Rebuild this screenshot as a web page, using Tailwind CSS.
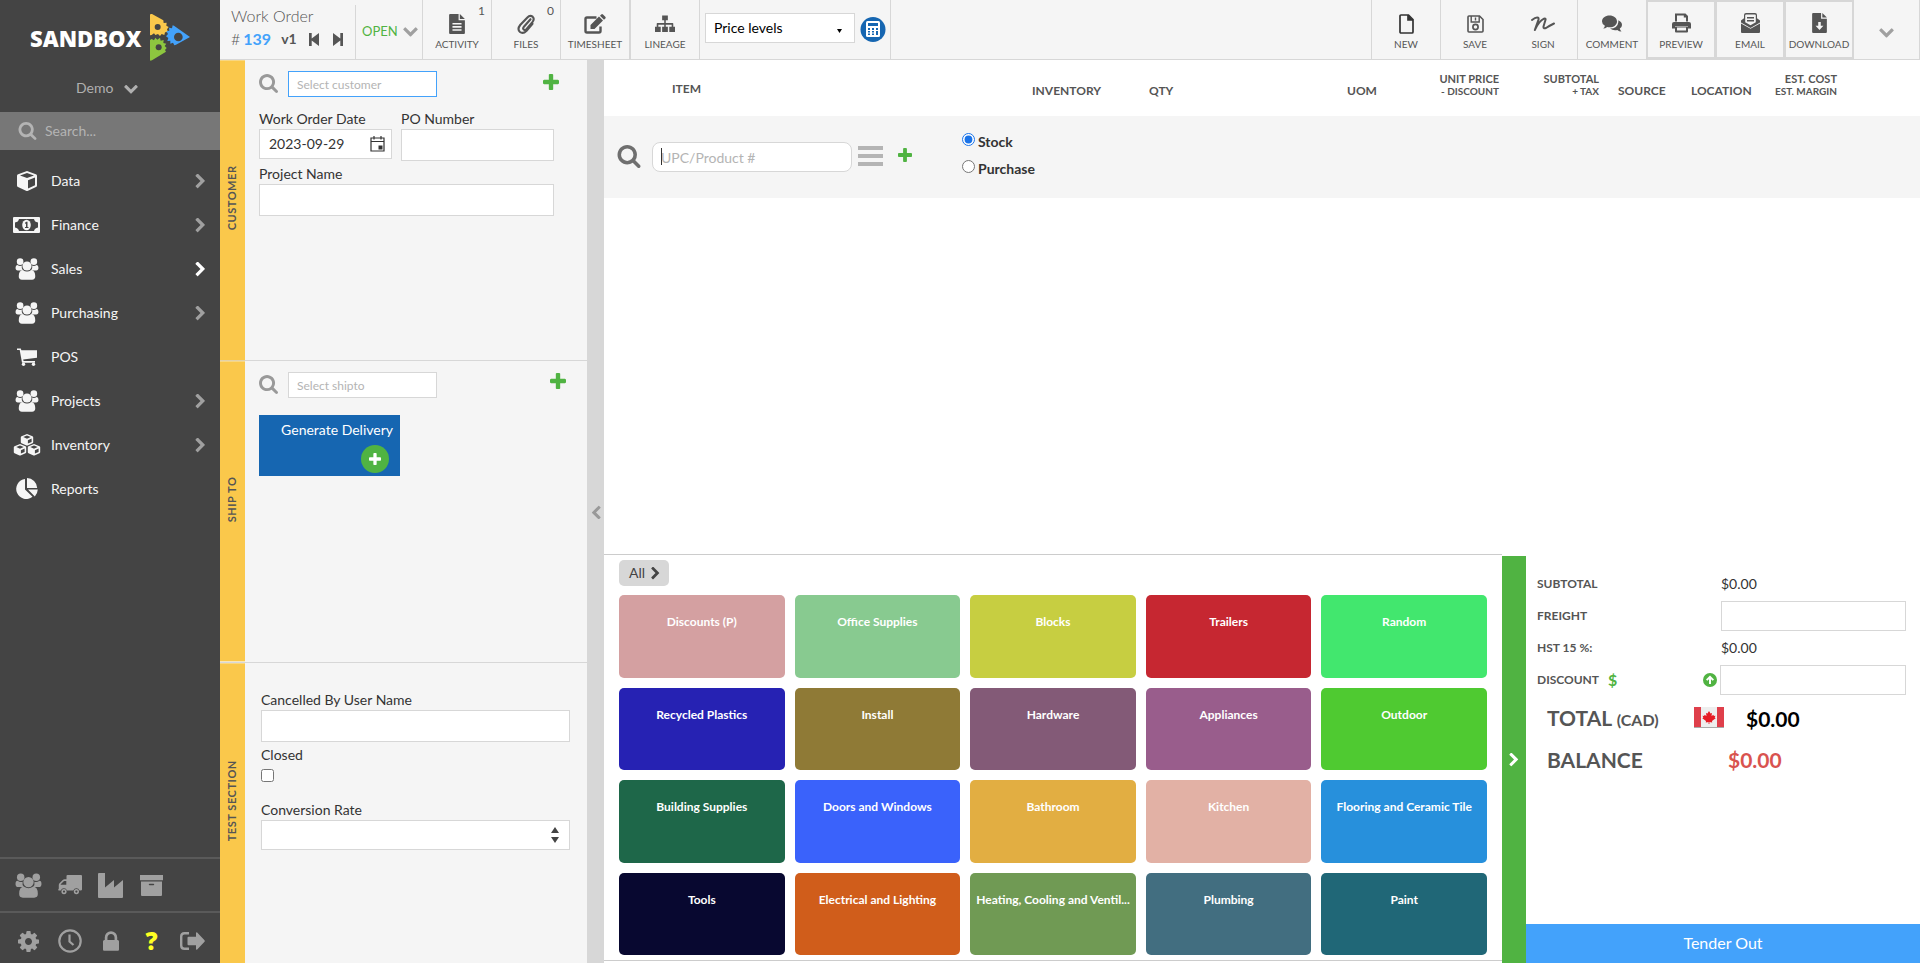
<!DOCTYPE html>
<html lang="en">
<head>
<meta charset="utf-8">
<title>Work Order #139</title>
<script src="https://cdn.jsdelivr.net/npm/@tailwindcss/browser@4"></script>
</head>
<body class="flex h-screen min-w-[1500px] overflow-hidden bg-white font-['Lato',sans-serif] text-sm leading-5 text-[#333]">

<svg class="hidden" aria-hidden="true">
  <symbol id="down" viewBox="64 64 1664 1664"><path d="M1683 808l-742 741q-19 19-45 19t-45-19l-742-741q-19-19-19-45.500t19-45.500l166-165q19-19 45-19t45 19l531 531 531-531q19-19 45-19t45 19l166 165q19 19 19 45.500t-19 45.500z"/></symbol>
  <symbol id="right" viewBox="64 64 1664 1664"><path d="M1363 877l-742 742q-19 19-45 19t-45-19l-166-166q-19-19-19-45t19-45l531-531-531-531q-19-19-19-45t19-45l166-166q19-19 45-19t45 19l742 742q19 19 19 45t-19 45z"/></symbol>
  <symbol id="search" viewBox="64 128 1664 1664"><path stroke="currentColor" stroke-width="0" d="M1216 832q0-185-131.500-316.500t-316.500-131.500-316.500 131.500-131.500 316.500 131.500 316.500 316.500 131.500 316.500-131.500 131.500-316.500zm512 832q0 52-38 90t-90 38q-54 0-90-38l-343-342q-179 124-399 124-143 0-273.500-55.500t-225-150-150-225-55.500-273.500 55.500-273.500 150-225 225-150 273.500-55.500 273.500 55.500 225 150 150 225 55.500 273.500q0 220-124 399l343 343q37 37 37 90z"/></symbol>
  <symbol id="plus" viewBox="192 128 1408 1408"><path d="M1600 736v192q0 40-28 68t-68 28h-416v416q0 40-28 68t-68 28h-192q-40 0-68-28t-28-68v-416h-416q-40 0-68-28t-28-68v-192q0-40 28-68t68-28h416v-416q0-40 28-68t68-28h192q40 0 68 28t28 68v416h416q40 0 68 28t28 68z"/></symbol>
  <symbol id="lock" viewBox="320 128 1152 1408"><path d="M640 768h512v-192q0-106-75-181t-181-75-181 75-75 181v192zm832 96v576q0 40-28 68t-68 28h-960q-40 0-68-28t-28-68v-576q0-40 28-68t68-28h32v-192q0-184 132-316t316-132 316 132 132 316v192h32q40 0 68 28t28 68z"/></symbol>
  <symbol id="cog" viewBox="128 128 1536 1536"><path d="M1152 896q0-106-75-181t-181-75-181 75-75 181 75 181 181 75 181-75 75-181zm512-109v222q0 12-8 23t-20 13l-185 28q-19 54-39 91 35 50 107 138 10 12 10 25t-9 23q-27 37-99 108t-94 71q-12 0-26-9l-138-108q-44 23-91 38-16 136-29 186-7 28-36 28h-222q-14 0-24.500-8.500t-11.500-21.500l-28-184q-49-16-90-37l-141 107q-10 9-25 9-14 0-25-11-126-114-165-168-7-10-7-23 0-12 8-23 15-21 51-66.500t54-70.500q-27-50-41-99l-183-27q-13-2-21-12.500t-8-23.500v-222q0-12 8-23t19-13l186-28q14-46 39-92-40-57-107-138-10-12-10-24 0-10 9-23 26-36 98.500-107.500t94.500-71.500q13 0 26 10l138 107q44-23 91-38 16-136 29-186 7-28 36-28h222q14 0 24.500 8.500t11.500 21.500l28 184q49 16 90 37l142-107q9-9 24-9 13 0 25 10 129 119 165 170 7 8 7 22 0 12-8 23-15 21-51 66.500t-54 70.500q26 50 41 98l183 28q13 2 21 12.500t8 23.500z"/></symbol>
  <symbol id="group" viewBox="0 0 26 24"><circle cx="5.500" cy="4" r="3.600"/><circle cx="20.500" cy="4" r="3.600"/><path d="M.5 10.500q0-3 2-3 2.500 1.800 4.800.8-.6 3.200 1.300 5.200H3q-2.500 0-2.500-3zM25.500 10.500q0-3-2-3-2.500 1.800-4.800.8.6 3.200-1.300 5.200H23q2.500 0 2.500-3z"/><circle cx="13" cy="8.700" r="5"/><path d="M4 20q0-6.500 4.500-7 4.500 3.500 9 0 4.500.5 4.500 7 0 3.700-3.500 3.700h-11Q4 23.700 4 20z"/></symbol>
  <symbol id="cube" viewBox="0 0 20 20"><path fill-rule="evenodd" d="M10 0l8.800 3.200q1.200.4 1.200 1.600v9.700q0 1-1 1.600L11 19.800q-1 .4-2 0l-8-3.700q-1-.6-1-1.600V4.800q0-1.200 1.200-1.600zM10 1.900L3 4.500 10 7.100l7-2.600zM11 17.600l7-3.400V6.600l-7 2.600z"/></symbol>
  <symbol id="money" viewBox="0 0 27 16"><path fill-rule="evenodd" d="M1 0h25q1 0 1 1v14q0 1-1 1H1q-1 0-1-1V1q0-1 1-1zM6 2Q5.500 5 2 5.500v5Q5.500 11 6 14h15q.5-3 4-3.500v-5Q21.500 5 21 2z"/><ellipse cx="13.500" cy="8" rx="4.300" ry="5.300"/><path d="M12 5.800l1.300-1.100h1.200v5.200h1v1.200H12V9.900h1V6.500l-.8.500z" fill="#444"/></symbol>
  <symbol id="cart" viewBox="0 0 20 18"><path d="M0 .5h3.800l.6 1.800H20v7.500L6.200 11.500l.4 1.500H18v1.700H5L2.700 2H0z"/><circle cx="6.500" cy="16.200" r="1.700"/><circle cx="16.500" cy="16.200" r="1.700"/></symbol>
  <symbol id="cubes" viewBox="0 0 28 22"><g fill-rule="evenodd"><path d="M14 0l5.500 2.200q.7.300.7 1v5q0 .7-.7 1L14.500 11.600h-1L8.500 9.200q-.7-.3-.7-1v-5q0-.7.7-1zm0 1.600L10.300 3.100 14 4.700l3.700-1.600zm.9 8l3.700-1.700V4.600l-3.700 1.600z"/><path d="M7 10l5.500 2.200q.7.300.7 1v5q0 .7-.7 1L7.500 21.600h-1L1.500 19.200q-.7-.3-.7-1v-5q0-.7.7-1zm0 1.600l-3.700 1.500L7 14.700l3.700-1.600zm.9 8l3.700-1.700v-3.300l-3.700 1.600zM21 10l5.500 2.200q.7.300.7 1v5q0 .7-.7 1L21.500 21.600h-1l-5-2.400q-.7-.3-.7-1v-5q0-.7.7-1zm0 1.600l-3.700 1.500 3.700 1.600 3.700-1.600zm.9 8l3.700-1.700v-3.300l-3.700 1.600z"/></g></symbol>
  <symbol id="pie" viewBox="0 0 23 22"><path d="M10 1v10.500l7.500 7.200A10 10 0 1 1 10 1z"/><path d="M12 0a10.500 10.500 0 0 1 10.200 10H12zM13 11.500h9.800a11 11 0 0 1-3 7z"/></symbol>
  <symbol id="truck" viewBox="0 0 24 20"><path fill-rule="evenodd" d="M9.500 0H23q1 0 1 1v13.500q0 1-1.500 1h-1a3.300 3.300 0 0 0-6.200 0H9a3.300 3.300 0 0 0-6.200 0H1Q0 15.500 0 14.700q.8-.5.800-1.200V10q0-1 .7-1.800l3.300-3.300q.7-.7 1.700-.7h2V1q0-1 1-1zM8.300 6H6L2.700 9.200v.6h5.600z"/><path fill-rule="evenodd" d="M6 14a2.600 2.600 0 1 1 0 5.200A2.600 2.600 0 0 1 6 14zm0 1.500a1.100 1.100 0 1 0 0 2.200 1.100 1.100 0 0 0 0-2.200zM18.400 14a2.600 2.600 0 1 1 0 5.200 2.600 2.600 0 0 1 0-5.200zm0 1.500a1.100 1.100 0 1 0 0 2.200 1.100 1.100 0 0 0 0-2.200z"/></symbol>
  <symbol id="industry" viewBox="0 0 25 25"><path d="M1 0h6v14.500l9-7.500v7.500L25 7v17q0 1-1 1H1q-1 0-1-1V1q0-1 1-1z"/></symbol>
  <symbol id="archive" viewBox="0 0 23 21"><path fill-rule="evenodd" d="M0 0h23v5.300H0zM1 6.500h21V20q0 1-1 1H2q-1 0-1-1zm8.500 2.200q-.7 0-.7.800t.7.800h4q.7 0 .7-.8t-.7-.8z"/></symbol>
  <symbol id="clock" viewBox="0 0 24 24"><circle cx="12" cy="12" r="10.700" fill="none" stroke="currentColor" stroke-width="2.200"/><path d="M11.500 5.500v7l4 3.500" fill="none" stroke="currentColor" stroke-width="2.200"/></symbol>
  <symbol id="signout" viewBox="0 0 25 18"><path d="M9 1.200H4.500Q1.200 1.200 1.200 4.500v9q0 3.300 3.300 3.300H9" fill="none" stroke="currentColor" stroke-width="2.400"/><path d="M16 .8v4H8.500q-1 0-1 1v6.400q0 1 1 1H16v4q.3.800 1.200.3l7.300-7.700q.6-.8 0-1.600L17.200.5Q16.300 0 16 .8z"/></symbol>
  <symbol id="doc" viewBox="0 0 15 19"><path fill-rule="evenodd" d="M1 0h8v6h6v12q0 1-1 1H1q-1 0-1-1V1q0-1 1-1zM3.200 8.500V10h8.600V8.500zm0 3V13h8.600v-1.500zm0 3V16h8.600v-1.500z"/><path d="M10.200 0L15 4.800h-4.800z"/></symbol>
  <symbol id="clip" viewBox="0 0 18 20"><path d="M13.500 5.200L6.700 13q-1.200 1.700.2 2.700 1.200.8 2.500-.5l6-7q2.500-3.300.2-5.500-2.600-2-5.200.7L3.200 11q-3.300 4.300-.2 7 3 2.300 6.600-1.300l5.900-6.800" fill="none" stroke="currentColor" stroke-width="2.100" stroke-linecap="round"/></symbol>
  <symbol id="edit" viewBox="0 0 22 20"><path d="M12.500 3.500H3Q1.500 3.500 1.500 5v12q0 1.500 1.500 1.500h12q1.500 0 1.500-1.500v-4.500" fill="none" stroke="currentColor" stroke-width="2.400"/><path d="M6.500 11L15 2.600l4 4-8.500 8.400h-4zM16 1.700l1.200-1.200q.9-.9 1.800 0l2.300 2.300q.8.800 0 1.700L20 5.700z"/></symbol>
  <symbol id="tree" viewBox="0 0 21 18"><path d="M7.500 0h6v5h-2.200v3h7.200q.7 0 .7.700V12H21v5.500h-6V12h2.500V9.700h-6.200V12h2.200v5.500h-6V12h2.200V9.700H3.500V12H6v5.500H0V12h1.800V8.700q0-.7.700-.7h7.200V5H7.500z"/></symbol>
  <symbol id="newdoc" viewBox="0 0 15 20"><path d="M1 2q0-1 1-1h7.500L14 5.500V18q0 1-1 1H2q-1 0-1-1zM9 1v5h5" fill="none" stroke="currentColor" stroke-width="1.700"/><path d="M9 1l5 5H9z"/></symbol>
  <symbol id="floppy" viewBox="0 0 17 18"><path d="M2 1h10.500L16 4.500V16q0 1-1 1H2q-1 0-1-1V2q0-1 1-1z" fill="none" stroke="currentColor" stroke-width="1.600"/><path d="M4.200 1v6h8V1M8.500 2.500v3" fill="none" stroke="currentColor" stroke-width="1.400"/><circle cx="8.500" cy="12" r="2.600" fill="none" stroke="currentColor" stroke-width="1.700"/></symbol>
  <symbol id="sign" viewBox="0 0 24 16"><path d="M1 4Q5 .8 7 1.700q1.200.8 0 3.300L3.800 14Q8 5 13 2.700q2.300-.7 1.300 1.800l-1.800 6q-.4 2.500 2.500 1.500Q19 9.500 23 7.500" fill="none" stroke="currentColor" stroke-width="2" stroke-linecap="round" stroke-linejoin="round"/></symbol>
  <symbol id="comments" viewBox="0 0 20 17"><path d="M7.500 0C11.700 0 15 2.600 15 5.900s-3.300 5.900-7.500 5.900q-1.300 0-2.300-.3Q3.300 13 1.200 13q1.500-1.200 1.700-2.700Q0 8.600 0 5.900C0 2.600 3.300 0 7.500 0z"/><path d="M16.300 4.800Q20 6.500 20 9.500q0 2-2.200 3.600.2 1.700 1.700 2.900-2.500 0-4.200-1.500-4 1-7.300-1.400 7.500 0 8.300-6.400.1-1 0-1.900z"/></symbol>
  <symbol id="print" viewBox="0 0 19 19"><path fill-rule="evenodd" d="M3 0h10.500L16 2.500V8h-2V4h-2.200V2H5v6H3zM2 8.500h15q2 0 2 2V15h-3v-2.500H3V15H0v-4.500q0-2 2-2zM3 13h13v5q0 1-1 1H4q-1 0-1-1zm2 1v3h9v-3z"/></symbol>
  <symbol id="mail" viewBox="0 0 19 20"><path d="M0 7.500l3-2.300V2q0-2 2-2h9q2 0 2 2v3.200l3 2.300v2L9.500 15 0 9.500z"/><path d="M4.200 2.500q0-1 1-1h8.600q1 0 1 1v6.800l-5.300 3-5.300-3z" fill="#f5f5f5"/><path d="M6 4h7v1.500H6zM6 7h7v1.500H6z"/><path d="M0 10.500l9.500 5.300 9.500-5.300V19q0 1-1 1H1q-1 0-1-1z"/></symbol>
  <symbol id="dldoc" viewBox="0 0 14 19"><path fill-rule="evenodd" d="M1 0h7.500v5.500H14V18q0 1-1 1H1q-1 0-1-1V1q0-1 1-1zm4.800 8.500V12H3.300L7 16.200l3.700-4.200H8.200V8.500z"/><path d="M9.700 0L14 4.300H9.700z"/></symbol>
</svg>

<!-- Sidebar -->
<aside class="flex w-[220px] shrink-0 flex-col bg-[#444] text-[#f5f5f5]">
  <div class="flex h-[72px] items-center gap-[6px] pl-[30px]">
    <span class="w-[110px] whitespace-nowrap pt-1 font-['Open_Sans',sans-serif] text-[22px] font-extrabold text-white">SANDBOX</span>
    <svg class="h-14 w-12" viewBox="0 0 144 168">
      <path d="M12 82V20q0-3 6-2l34 19 1 8 9-1-1 9 7 4-5 7 3 8-9 1-2 8-8-3-5 6-6-6-8 3-4-5-7 5z" fill="#fac84b"/>
      <path d="M132 87L84 53l-4-1-2 9-9-2 1 9-9 2 5 8-6 7 7 5-3 9 9-1 0 9 8-3 4 8 5-2z" fill="#43a2fb"/>
      <path d="M12 156V96l5-3 7 4 4-8 6 6 8-6 2 9 9-2-1 9 9 2-5 7 6 6-5 6 3 5-42 26q-6 3-6-1z" fill="#8dc63f"/>
      <circle cx="35" cy="57" r="9" fill="#444"/><circle cx="38" cy="118" r="9" fill="#444"/><circle cx="97" cy="87" r="13" fill="#444"/>
    </svg>
  </div>
  <button class="flex h-10 items-center gap-[11px] pb-2 pl-[76px] text-[#b0b0b0]">Demo <svg class="h-[14px] w-[14px] fill-current"><use href="#down"/></svg></button>
  <label class="flex h-[38px] shrink-0 items-center gap-2 bg-[#777] pl-[18px] text-[#b4b4b4]">
    <svg class="h-[18px] w-[19px] fill-current"><use href="#search"/></svg>
    <input class="w-40 bg-transparent text-sm outline-none placeholder:text-[#b4b4b4]" type="text" placeholder="Search..." aria-label="Search">
  </label>
  <nav class="flex flex-1 flex-col pt-[9px]">
    <a href="#" class="flex h-11 items-center pr-3"><span class="mr-[-2px] flex w-[53px] justify-center"><svg class="h-5 w-5 fill-current"><use href="#cube"/></svg></span><span class="flex-1">Data</span><svg class="h-[15px] w-[15px] fill-[#a0a0a0]"><use href="#right"/></svg></a>
    <a href="#" class="flex h-11 items-center pr-3"><span class="mr-[-2px] flex w-[53px] justify-center"><svg class="h-4 w-[27px] fill-current"><use href="#money"/></svg></span><span class="flex-1">Finance</span><svg class="h-[15px] w-[15px] fill-[#a0a0a0]"><use href="#right"/></svg></a>
    <a href="#" class="flex h-11 items-center pr-3"><span class="mr-[-2px] flex w-[53px] justify-center"><svg class="h-[22px] w-6 fill-current"><use href="#group"/></svg></span><span class="flex-1">Sales</span><svg class="h-[15px] w-[15px] fill-white"><use href="#right"/></svg></a>
    <a href="#" class="flex h-11 items-center pr-3"><span class="mr-[-2px] flex w-[53px] justify-center"><svg class="h-[22px] w-6 fill-current"><use href="#group"/></svg></span><span class="flex-1">Purchasing</span><svg class="h-[15px] w-[15px] fill-[#a0a0a0]"><use href="#right"/></svg></a>
    <a href="#" class="flex h-11 items-center pr-3"><span class="mr-[-2px] flex w-[53px] justify-center"><svg class="h-[18px] w-5 fill-current"><use href="#cart"/></svg></span><span class="flex-1">POS</span></a>
    <a href="#" class="flex h-11 items-center pr-3"><span class="mr-[-2px] flex w-[53px] justify-center"><svg class="h-[22px] w-6 fill-current"><use href="#group"/></svg></span><span class="flex-1">Projects</span><svg class="h-[15px] w-[15px] fill-[#a0a0a0]"><use href="#right"/></svg></a>
    <a href="#" class="flex h-11 items-center pr-3"><span class="mr-[-2px] flex w-[53px] justify-center"><svg class="h-[22px] w-7 fill-current"><use href="#cubes"/></svg></span><span class="flex-1">Inventory</span><svg class="h-[15px] w-[15px] fill-[#a0a0a0]"><use href="#right"/></svg></a>
    <a href="#" class="flex h-11 items-center pr-3"><span class="mr-[-2px] flex w-[53px] justify-center"><svg class="h-[22px] w-[23px] fill-current"><use href="#pie"/></svg></span><span class="flex-1">Reports</span></a>
  </nav>
  <div class="flex h-[54px] border-t-2 border-[#5a5a5a] pl-2 text-[#a0a0a0]">
    <button class="flex w-[41px] items-center justify-center" aria-label="Contacts"><svg class="h-[25px] w-[27px] fill-current"><use href="#group"/></svg></button>
    <button class="flex w-[41px] items-center justify-center" aria-label="Vendors"><svg class="h-5 w-6 fill-current"><use href="#truck"/></svg></button>
    <button class="flex w-[41px] items-center justify-center" aria-label="Manufacturing"><svg class="h-[25px] w-[25px] fill-current"><use href="#industry"/></svg></button>
    <button class="flex w-[41px] items-center justify-center" aria-label="Archive"><svg class="h-[21px] w-[23px] fill-current"><use href="#archive"/></svg></button>
  </div>
  <div class="flex h-[52px] border-t-2 border-[#5a5a5a] pl-2 pt-[6px] text-[#a0a0a0]">
    <button class="flex w-[41px] items-center justify-center" aria-label="Settings"><svg class="h-[21px] w-[21px] fill-current"><use href="#cog"/></svg></button>
    <button class="flex w-[41px] items-center justify-center" aria-label="Time clock"><svg class="h-6 w-6 fill-current"><use href="#clock"/></svg></button>
    <button class="flex w-[41px] items-center justify-center" aria-label="Lock"><svg class="h-5 w-4 fill-current"><use href="#lock"/></svg></button>
    <button class="flex w-[41px] items-center justify-center font-['Open_Sans',sans-serif] text-2xl font-extrabold text-[#ffff22]">?</button>
    <button class="flex w-[41px] items-center justify-center" aria-label="Sign out"><svg class="h-[18px] w-[25px] fill-current"><use href="#signout"/></svg></button>
  </div>
</aside>

<div class="flex min-w-0 flex-1 flex-col">
  <!-- Toolbar -->
  <header class="flex h-[60px] shrink-0 border-b border-[#d7d7d7] bg-[#f5f5f5] text-[#555]">
    <div class="flex w-[135px] flex-col justify-center gap-[3px] pl-[11px] pb-1">
      <h1 class="text-base leading-5 font-light">Work Order</h1>
      <div class="flex items-center text-base leading-5">
        <span class="font-light">#</span><a href="#" class="ml-[3px] font-bold text-[#43a2fb]">139</a><span class="ml-[10px] text-sm font-bold">v1</span>
        <button class="ml-3" aria-label="Previous"><svg class="h-[13px] w-[10px] fill-current" viewBox="0 0 10 13"><path d="M0 0h2.700v5.500L10 0v13L2.700 7.500V13H0z"/></svg></button>
        <button class="ml-[14px]" aria-label="Next"><svg class="h-[13px] w-[10px] fill-current" viewBox="0 0 10 13"><path d="M10 0H7.300v5.500L0 0v13l7.300-5.500V13H10z"/></svg></button>
      </div>
    </div>
    <div class="mt-[5px] w-px bg-[#d7d7d7]"></div>
    <button class="flex w-[66px] items-center gap-[5px] pl-[6px] pt-[2px] text-[13px] text-[#50b342]"><span>OPEN</span><svg class="h-[15px] w-[15px] fill-[#a0a0a0]"><use href="#down"/></svg></button>
    <button class="relative flex w-[69px] flex-col items-center gap-1 border-l border-[#d7d7d7] pt-[14px] text-[10px] leading-3"><svg class="h-5 w-4 fill-current"><use href="#doc"/></svg>ACTIVITY<span class="absolute right-[6px] top-1 text-xs leading-[14px]">1</span></button>
    <button class="relative flex w-[69px] flex-col items-center gap-1 border-l border-[#d7d7d7] pt-[14px] text-[10px] leading-3"><svg class="h-5 w-[18px] fill-current"><use href="#clip"/></svg>FILES<span class="absolute right-[6px] top-1 text-xs leading-[14px]">0</span></button>
    <button class="flex w-[69px] flex-col items-center gap-1 border-l border-[#d7d7d7] pt-[14px] text-[10px] leading-3"><svg class="h-5 w-[22px] fill-current"><use href="#edit"/></svg>TIMESHEET</button>
    <button class="flex w-[70px] flex-col items-center gap-1 border-l-2 border-[#d7d7d7] pt-[14px] text-[10px] leading-3"><svg class="h-5 w-5 fill-current"><use href="#tree"/></svg>LINEAGE</button>
    <div class="flex w-[192px] items-center gap-[5px] border-x border-[#d7d7d7] pl-[5px] pb-1">
      <div class="relative">
        <select class="block h-[30px] w-[150px] appearance-none border border-[#d7d7d7] bg-white pl-2 text-sm text-black" aria-label="Price levels"><option>Price levels</option></select>
        <svg class="pointer-events-none absolute right-[13px] top-4 h-1 w-[5px]" viewBox="0 0 5 4"><path d="M0 0h5L2.500 4z"/></svg>
      </div>
      <button class="pt-1" aria-label="Calculator"><svg class="h-[26px] w-[26px]" viewBox="0 0 26 26"><circle cx="13" cy="12.500" r="12.500" fill="#1666b1"/><rect x="6" y="4" width="14" height="16" rx="1.500" fill="#fff"/><path d="M8 6h10v3H8zM8 11h2v2H8zm4 0h2v2h-2zm4 0h2v2h-2zm-8 3h2v1.500H8zm4 0h2v1.500h-2zm-4 2.500h2v1.500H8zm4 0h2v1.500h-2zM16 14h2v4h-2z" fill="#1666b1"/></svg></button>
    </div>
    <div class="ml-auto flex text-[10px] leading-3">
      <button class="flex w-[69px] flex-col items-center gap-1 border-l border-[#d7d7d7] pt-[14px]"><svg class="h-5 w-[15px] fill-current text-[#333]"><use href="#newdoc"/></svg>NEW</button>
      <button class="flex w-[69px] flex-col items-center gap-1 border-l border-[#d7d7d7] pt-[14px]"><svg class="h-5 w-[17px] fill-current"><use href="#floppy"/></svg>SAVE</button>
      <button class="flex w-[68px] flex-col items-center gap-1 pt-[14px]"><svg class="h-5 w-6 fill-current"><use href="#sign"/></svg>SIGN</button>
      <button class="flex w-[69px] flex-col items-center gap-1 border-l border-[#d7d7d7] pt-[14px]"><svg class="h-5 w-5 fill-current"><use href="#comments"/></svg>COMMENT</button>
      <button class="flex w-[69px] flex-col items-center gap-[5px] border-2 border-r border-[#d7d7d7] pt-[11px]"><svg class="h-5 w-[19px] fill-current"><use href="#print"/></svg>PREVIEW</button>
      <button class="flex w-[69px] flex-col items-center gap-[5px] border-2 border-r border-[#d7d7d7] pt-[11px]"><svg class="h-5 w-[19px] fill-current"><use href="#mail"/></svg>EMAIL</button>
      <button class="flex w-[70px] flex-col items-center gap-[5px] border-2 border-[#d7d7d7] pt-[11px]"><svg class="h-5 w-[15px] fill-current"><use href="#dldoc"/></svg>DOWNLOAD</button>
      <button class="flex w-[66px] items-center justify-center border-r border-[#d7d7d7] pt-1" aria-label="More"><svg class="h-[15px] w-[15px] fill-[#a0a0a0]"><use href="#down"/></svg></button>
    </div>
  </header>

  <div class="flex min-h-0 flex-1">
    <!-- Details column -->
    <div class="flex w-[367px] shrink-0 flex-col bg-[#f5f5f5]">
      <section class="flex flex-1 border-b border-[#d7d7d7]">
        <h2 class="flex w-[25px] rotate-180 items-center justify-center bg-[#fac84b] pl-[2px] pt-6 text-[11px] font-bold tracking-wider text-[#555] [writing-mode:vertical-rl]">CUSTOMER</h2>
        <div class="flex-1 pl-[14px] pt-[11px]">
          <div class="flex items-center">
            <svg class="mb-[2px] h-[19px] w-[19px] fill-[#999]"><use href="#search"/></svg>
            <input class="ml-[10px] h-[26px] w-[149px] border border-[#43a2fb] bg-white px-2 text-xs outline-none placeholder:text-[#b4b4b4]" type="text" placeholder="Select customer" aria-label="Customer">
            <button class="mb-1 ml-[106px]" aria-label="Add customer"><svg class="h-4 w-4 fill-[#50b342]"><use href="#plus"/></svg></button>
          </div>
          <div class="mt-3 flex gap-[9px]">
            <div class="w-[133px]">
              <label for="wodate" class="block">Work Order Date</label>
              <div class="flex h-[30px] items-center border border-[#d7d7d7] bg-white">
                <input id="wodate" class="w-[110px] pl-[9px] text-sm outline-none" type="text" value="2023-09-29">
                <button aria-label="Pick date"><svg class="h-4 w-4" viewBox="0 0 16 16"><path d="M1 2h13v13H1zM1 5.500h13M4 0v3.500M11 0v3.500" fill="none" stroke="#333" stroke-width="1.200"/><path d="M8.500 9.500h4v4h-4z" fill="#333"/></svg></button>
              </div>
            </div>
            <div class="w-[153px]">
              <label for="po" class="block">PO Number</label>
              <input id="po" class="block h-8 w-full border border-[#d7d7d7] bg-white px-2 outline-none" type="text">
            </div>
          </div>
          <label for="project" class="mt-[3px] block">Project Name</label>
          <input id="project" class="block h-8 w-[295px] border border-[#d7d7d7] bg-white px-2 outline-none" type="text">
        </div>
      </section>
      <section class="flex flex-1 border-b border-[#d7d7d7]">
        <h2 class="flex w-[25px] rotate-180 items-center justify-center bg-[#fac84b] pl-[2px] pt-6 text-[11px] font-bold tracking-wider text-[#555] [writing-mode:vertical-rl]">SHIP TO</h2>
        <div class="flex-1 pl-[14px] pt-[11px]">
          <div class="flex items-center">
            <svg class="mb-[2px] h-[19px] w-[19px] fill-[#999]"><use href="#search"/></svg>
            <input class="ml-[10px] h-[26px] w-[149px] border border-[#d7d7d7] bg-white px-2 text-xs outline-none placeholder:text-[#b4b4b4]" type="text" placeholder="Select shipto" aria-label="Ship to">
            <button class="mb-2 ml-[113px]" aria-label="Add ship to"><svg class="h-4 w-4 fill-[#50b342]"><use href="#plus"/></svg></button>
          </div>
          <button class="mt-[17px] flex h-[61px] w-[141px] flex-col items-end gap-[5px] bg-[#1666b1] pr-[7px] pt-[5px] text-white">Generate Delivery
            <span class="mr-1 flex h-7 w-7 items-center justify-center rounded-full bg-[#50b342]"><svg class="h-3 w-3 fill-white"><use href="#plus"/></svg></span>
          </button>
        </div>
      </section>
      <section class="flex flex-1">
        <h2 class="flex w-[25px] rotate-180 items-center justify-center bg-[#fac84b] pl-[2px] pt-6 text-[11px] font-bold tracking-wider text-[#555] [writing-mode:vertical-rl]">TEST SECTION</h2>
        <div class="flex-1 pl-4 pt-[27px]">
          <label for="cancelled" class="block">Cancelled By User Name</label>
          <input id="cancelled" class="block h-8 w-[309px] border border-[#d7d7d7] bg-white px-2 outline-none" type="text">
          <label for="closed" class="mt-[3px] block">Closed</label>
          <input id="closed" class="mt-1 block h-[13px] w-[13px]" type="checkbox">
          <label for="rate" class="mt-[18px] block">Conversion Rate</label>
          <div class="relative w-[309px]">
            <select id="rate" class="h-[30px] w-full appearance-none border border-[#d7d7d7] bg-white px-2"><option></option></select>
            <svg class="pointer-events-none absolute right-[11px] top-[7px] h-4 w-2 fill-[#444]" viewBox="0 0 8 16"><path d="M4 0l4 6H0zM4 16l4-6H0z"/></svg>
          </div>
        </div>
      </section>
    </div>
    <button class="flex w-[17px] shrink-0 items-center justify-center bg-[#d7d7d7]" aria-label="Collapse panel"><svg class="h-[14px] w-[14px] rotate-180 fill-[#999]"><use href="#right"/></svg></button>

    <main class="flex min-w-0 flex-1 flex-col">
      <!-- Line items -->
      <div class="flex-1">
        <table class="w-full table-fixed text-left text-xs leading-[14px] text-[#555]">
          <colgroup><col><col class="w-[117px]"><col class="w-[198px]"><col class="w-[52px]"><col class="w-[100px]"><col class="w-[100px]"><col class="w-[92px]"><col class="w-[66px]"><col class="w-20"><col class="w-[83px]"></colgroup>
          <thead>
            <tr class="h-14 [&>th]:align-middle">
              <th class="pt-[2px] pl-[68px]">ITEM</th><th class="pt-[6px]">INVENTORY</th><th class="pt-[6px]">QTY</th><th class="pt-[6px]">UOM</th>
              <th class="pb-[6px] text-right text-[11px] leading-3">UNIT PRICE<br><span class="text-[10px]">- DISCOUNT</span></th>
              <th class="pb-[6px] text-right text-[11px] leading-3">SUBTOTAL<br><span class="text-[10px]">+ TAX</span></th>
              <th class="pl-[19px] pt-[6px]">SOURCE</th><th class="pt-[6px]">LOCATION</th>
              <th class="pb-[6px] text-right text-[11px] leading-3">EST. COST<br><span class="text-[10px]">EST. MARGIN</span></th><th></th>
            </tr>
          </thead>
        </table>
        <div class="flex h-[82px] items-center bg-[#f5f5f5] pl-[13px]">
          <svg class="mb-[2px] h-[23px] w-6 fill-[#6f6f6f]"><use href="#search"/></svg>
          <div class="relative ml-[11px]">
            <input class="h-[30px] w-[200px] rounded-lg border border-[#d7d7d7] bg-white px-2 text-sm outline-none placeholder:text-[#b4b4b4]" type="text" placeholder="UPC/Product #" aria-label="UPC or product number">
            <span class="absolute left-[9px] top-[6px] h-[17px] w-px bg-[#333]"></span>
          </div>
          <button class="mb-[2px] ml-[6px]" aria-label="List"><svg class="h-5 w-[25px] fill-[#b4b4b4]" viewBox="0 0 25 20"><path d="M0 0h25v4H0zM0 8h25v4H0zM0 16h25v4H0z"/></svg></button>
          <button class="mb-1 ml-[15px]" aria-label="Add line"><svg class="h-[14px] w-[14px] fill-[#50b342]"><use href="#plus"/></svg></button>
          <div class="mb-1 ml-[50px] flex flex-col gap-[7px] text-sm font-bold">
            <label class="flex items-center gap-[3px]"><input type="radio" name="src" class="mb-1 h-[13px] w-[13px] accent-[#1a73e8]" checked>Stock</label>
            <label class="flex items-center gap-[3px]"><input type="radio" name="src" class="mb-1 h-[13px] w-[13px]">Purchase</label>
          </div>
        </div>
      </div>

      <div class="flex h-[409px] shrink-0">
        <!-- Product categories -->
        <div class="min-w-0 flex-1 border-t border-[#ccc]">
          <div class="border-b border-[#ccc] px-[15px] py-[5px]">
            <button class="flex h-[26px] w-[50px] items-center gap-1 rounded-[5px] bg-[#d7d7d7] pl-[10px] text-[#444]">All <svg class="h-[13px] w-[13px] fill-current"><use href="#right"/></svg></button>
            <div class="mt-[9px] grid h-[360px] grid-cols-5 grid-rows-4 gap-[10px] text-xs font-bold leading-4 text-white [&>button]:flex [&>button]:justify-center [&>button]:rounded-[5px] [&>button]:px-1 [&>button]:pt-[19px]">
              <button class="bg-[#d4a0a1]">Discounts (P)</button><button class="bg-[#88ca90]">Office Supplies</button><button class="bg-[#c7ce41]">Blocks</button><button class="bg-[#c62731]">Trailers</button><button class="bg-[#42e76e]">Random</button>
              <button class="bg-[#2622b3]">Recycled Plastics</button><button class="bg-[#8f7a36]">Install</button><button class="bg-[#835a77]">Hardware</button><button class="bg-[#995d8c]">Appliances</button><button class="bg-[#4fca31]">Outdoor</button>
              <button class="bg-[#1e6749]">Building Supplies</button><button class="bg-[#3a62fb]">Doors and Windows</button><button class="bg-[#e2ae42]">Bathroom</button><button class="bg-[#e2b1a5]">Kitchen</button><button class="bg-[#2790dc]">Flooring and Ceramic Tile</button>
              <button class="bg-[#080830]">Tools</button><button class="bg-[#d05d1b]">Electrical and Lighting</button><button class="bg-[#709a54]"><span class="whitespace-nowrap">Heating, Cooling and Ventil...</span></button><button class="bg-[#426e80]">Plumbing</button><button class="bg-[#206777]">Paint</button>
            </div>
          </div>
        </div>
        <button class="mt-[2px] flex w-6 shrink-0 items-center justify-center bg-[#50b342]" aria-label="Hide totals"><svg class="h-[14px] w-[14px] fill-white"><use href="#right"/></svg></button>

        <!-- Totals -->
        <div class="flex w-[394px] shrink-0 flex-col pt-[14px]">
          <dl class="grid grid-cols-[165px_18px_1fr] grid-rows-[32px_32px_32px_32px] items-center pl-[11px] pr-[14px] [&>dt]:text-xs [&>dt]:font-bold [&>dt]:text-[#555]">
            <dt>SUBTOTAL</dt><dd class="col-span-2 pl-[19px]">$0.00</dd>
            <dt><label for="freight">FREIGHT</label></dt><dd class="col-span-2 pl-[19px]"><input id="freight" class="block h-[30px] w-full border border-[#d7d7d7] bg-white px-2 outline-none" type="text"></dd>
            <dt>HST 15 %:</dt><dd class="col-span-2 pl-[19px]">$0.00</dd>
            <dt class="flex items-center gap-[9px]"><label for="discount">DISCOUNT</label><button class="text-base font-bold text-[#50b342]">$</button></dt>
            <dd><button class="ml-px block" aria-label="Apply discount"><svg class="h-[14px] w-[14px]" viewBox="0 0 14 14"><circle cx="7" cy="7" r="7" fill="#50b342"/><path d="M7 2.500l4 4-1.300 1.300L8 6.200V11H6V6.200L4.300 7.800 3 6.500z" fill="#fff"/></svg></button></dd>
            <dd><input id="discount" class="block h-[30px] w-full border border-[#d7d7d7] bg-white px-2 outline-none" type="text"></dd>
          </dl>
          <div class="flex h-[46px] items-center pl-[21px] text-[21px] leading-6 font-bold text-[#555]">
            <span class="w-[147px]">TOTAL <span class="text-base">(CAD)</span></span>
            <svg class="mb-1 h-[21px] w-[30px]" viewBox="0 0 30 21"><path d="M0 0h30v21H0z" fill="#eee"/><path d="M0 0h7v20H0zM23 0h7v20h-7z" fill="#df3f4b"/><path d="M0 20h30v1H0z" fill="#aaa"/><path d="M15 4l1.500 2.500 1.500-.6-.5 3 2-1.200.3 1.200 1.700-.2-.8 1.800 1 .8-3.700 2.700.2 1.500-2.800-.4V17h-.8v-1.900l-2.800.4.200-1.500-3.700-2.700 1-.8-.8-1.800 1.700.2.300-1.200 2 1.200-.5-3 1.500.6z" fill="#e61c25"/></svg>
            <span class="ml-[22px] text-black">$0.00</span>
          </div>
          <div class="flex h-9 items-center pl-[21px] text-[21px] leading-6 font-bold text-[#555]"><span class="w-[181px]">BALANCE</span><span class="text-[#d9534f]">$0.00</span></div>
          <button class="mt-auto h-[39px] bg-[#43a2fb] pb-[2px] text-base text-white">Tender Out</button>
        </div>
      </div>
    </main>
  </div>
</div>
</body>
</html>
